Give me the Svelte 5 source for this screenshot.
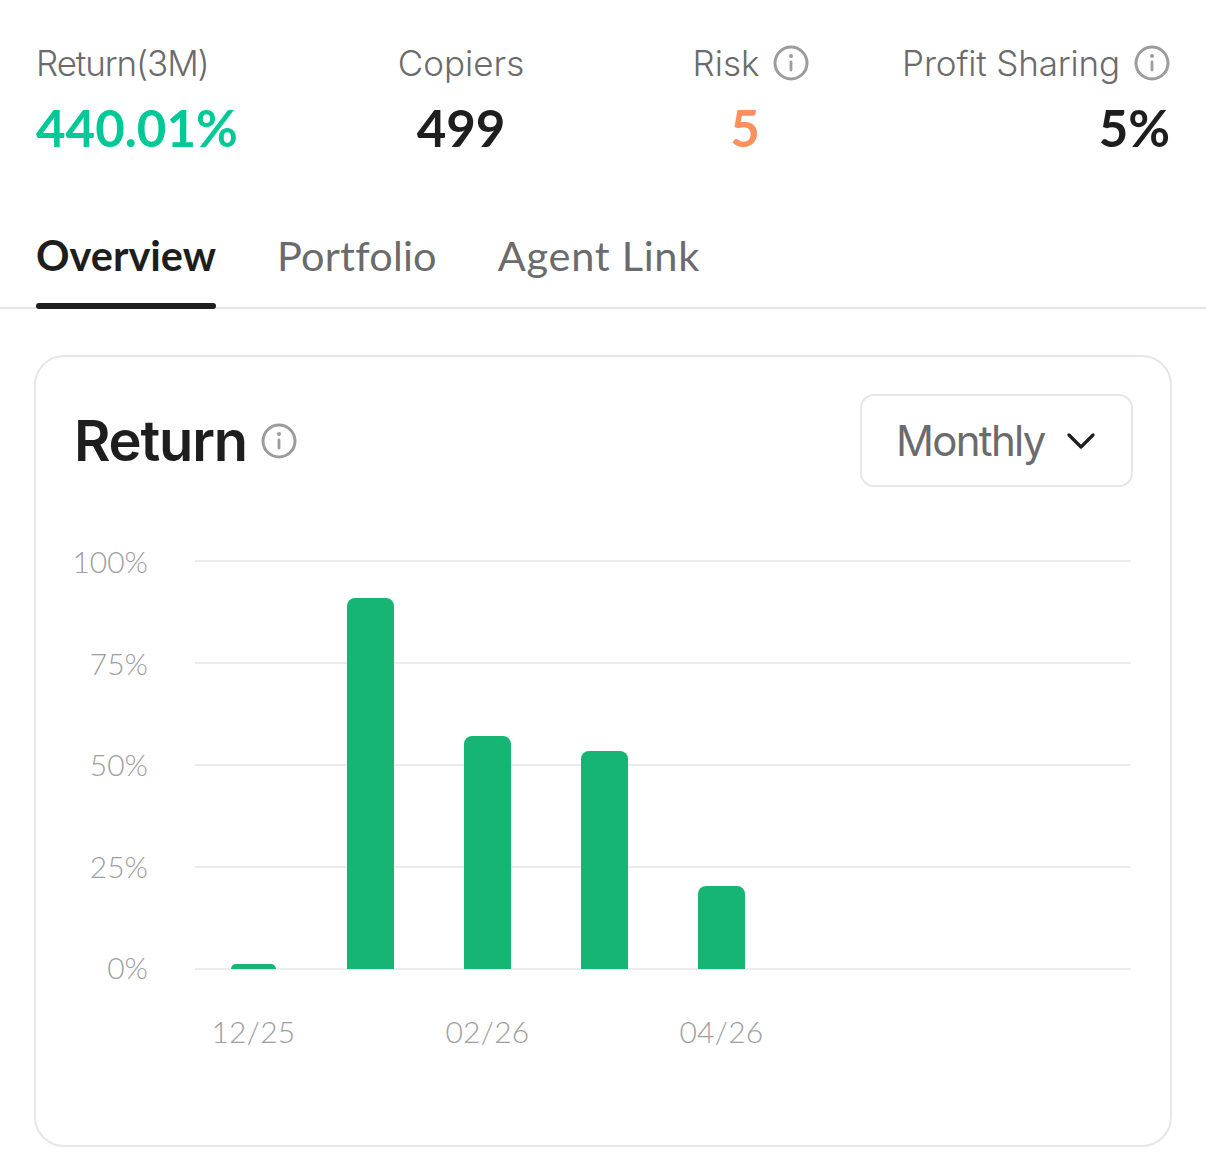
<script>
  const stats = [
    { label: 'Return(3M)', value: '440.01%', cls: 'green', info: false, align: 'start' },
    { label: 'Copiers', value: '499', cls: '', info: false, align: 'center' },
    { label: 'Risk', value: '5', cls: 'orange', info: true, align: 'center' },
    { label: 'Profit Sharing', value: '5%', cls: '', info: true, align: 'end' }
  ];
  const tabs = ['Overview', 'Portfolio', 'Agent Link'];
  const ticks = ['100%', '75%', '50%', '25%', '0%'];
  // percent of plot height per month, empty slots are future months
  const bars = [1.2, 90.9, 57.1, 53.4, 20.3, 0, 0, 0];
  const months = ['12/25', '', '02/26', '', '04/26', '', '', ''];
</script>

{#snippet info(size)}
  <svg class="info" width={size} height={size} viewBox="0 0 36 36" fill="none">
    <circle cx="18" cy="18" r="16" stroke="#9c9c9c" stroke-width="3" />
    <circle cx="18" cy="11" r="2" fill="#9c9c9c" />
    <rect x="16.6" y="15.5" width="2.8" height="11" rx="1.4" fill="#9c9c9c" />
  </svg>
{/snippet}

<div class="page">
  <div class="stats">
    {#each stats as s}
      <div class="stat {s.align}">
        <div class="label">
          <span>{s.label}</span>
          {#if s.info}{@render info(36)}{/if}
        </div>
        <div class="value {s.cls}">{s.value}</div>
      </div>
    {/each}
  </div>

  <div class="tabs">
    {#each tabs as t, i}
      <div class="tab" class:active={i === 0}>{t}</div>
    {/each}
  </div>

  <div class="card">
    <div class="head">
      <div class="title">
        <h2>Return</h2>
        {@render info(36)}
      </div>
      <div class="select">
        <span>Monthly</span>
        <svg width="28" height="16" viewBox="0 0 28 16" fill="none">
          <path d="M2 2 L14 14 L26 2" stroke="#1e1e1e" stroke-width="3.2" stroke-linecap="round" stroke-linejoin="round" />
        </svg>
      </div>
    </div>

    <div class="chart">
      <div class="yaxis">
        {#each ticks as t}<div class="tick">{t}</div>{/each}
      </div>
      <div class="main">
        <div class="plot">
          {#each ticks as t}<div class="line"></div>{/each}
          <div class="bars">
            {#each bars as b}
              <div class="slot">
                {#if b > 0}<div class="bar" style="height: {b}%"></div>{/if}
              </div>
            {/each}
          </div>
        </div>
        <div class="xaxis">
          {#each months as m}<div class="month">{m}</div>{/each}
        </div>
      </div>
    </div>
  </div>
</div>

<style>
  :global(body) {
    background: #fff;
  }

  .page {
    width: 1206px;
    height: 1168px;
    padding-top: 40px;
    box-sizing: border-box;
    font-family: Lato, "Liberation Sans", sans-serif;
    overflow: hidden;
  }

  .stats {
    display: grid;
    grid-template-columns: 350px 150px 325px 1fr;
    padding: 0 36px;
  }

  .stat {
    display: flex;
    flex-direction: column;
  }
  .stat.start { align-items: flex-start; }
  .stat.center { align-items: center; }
  .stat.end { align-items: flex-end; }
  .stat:nth-child(3) { margin-left: 105px; }

  .label {
    display: flex;
    align-items: center;
    gap: 14px;
    height: 46px;
    font-family: Inter, "Liberation Sans", sans-serif;
    font-size: 35px;
    font-weight: 300;
    color: #6b6b6b;
  }
  .stat:first-child .label { letter-spacing: -1.1px; }
  .stat:last-child .label { letter-spacing: -0.15px; }

  .value {
    margin-top: 10px;
    font-size: 51px;
    line-height: 64px;
    font-weight: 700;
    color: #1e1e1e;
  }
  .value.green { color: #00c896; }
  .value.orange { color: #ff8f5c; padding-right: 12px; }

  .info {
    flex: none;
  }

  .tabs {
    display: flex;
    gap: 61px;
    margin-top: 52px;
    padding: 0 36px;
    height: 97px;
    box-sizing: border-box;
    border-bottom: 2px solid #e6e6e6;
  }

  .tab {
    position: relative;
    font-size: 41.5px;
    line-height: 86px;
    color: #6b6b6b;
  }
  .tab:nth-child(2) { letter-spacing: 0.2px; }
  .tab:nth-child(3) { letter-spacing: 0.7px; }
  .tab.active {
    color: #1e1e1e;
    font-weight: 700;
  }
  .tab.active::after {
    content: '';
    position: absolute;
    left: 0;
    right: 0;
    top: 91px;
    height: 6px;
    border-radius: 3px;
    background: #1e1e1e;
  }

  .card {
    margin: 46px 34px 0;
    height: 792px;
    box-sizing: border-box;
    border: 2px solid #e6e6e6;
    border-radius: 30px;
    padding: 37px 37px 0 39px;
  }

  .head {
    display: flex;
    justify-content: space-between;
    align-items: center;
  }

  .title {
    display: flex;
    align-items: center;
    gap: 14px;
  }

  h2 {
    margin: 0 0 0 -1px;
    font-family: Inter, "Liberation Sans", sans-serif;
    font-size: 56px;
    font-weight: 600;
    letter-spacing: -1.2px;
    color: #1e1e1e;
  }

  .select {
    display: flex;
    align-items: center;
    justify-content: space-between;
    width: 273px;
    height: 93px;
    box-sizing: border-box;
    padding: 0 36px 0 34px;
    border: 2px solid #e6e6e6;
    border-radius: 14px;
    font-family: Inter, "Liberation Sans", sans-serif;
    font-size: 42px;
    letter-spacing: -1.7px;
    color: #6b6b6b;
  }

  .chart {
    display: flex;
    margin-top: 73px;
    margin-right: 2px;
  }

  .yaxis {
    width: 120px;
    height: 408px;
    flex: none;
    display: flex;
    flex-direction: column;
    justify-content: space-between;
    align-items: flex-end;
    box-sizing: border-box;
    padding-right: 47px;
  }

  .tick {
    height: 2px;
    line-height: 2px;
    font-size: 30px;
    font-weight: 300;
    color: #9e9e9e;
  }

  .main {
    flex: 1;
  }

  .plot {
    position: relative;
    height: 410px;
    display: flex;
    flex-direction: column;
    justify-content: space-between;
  }

  .line {
    height: 2px;
    background: #ececec;
  }

  .bars {
    position: absolute;
    left: 0;
    right: 0;
    top: 1px;
    bottom: 1px;
    display: grid;
    grid-template-columns: repeat(8, 1fr);
  }

  .slot {
    display: flex;
    align-items: flex-end;
    justify-content: center;
  }

  .bar {
    width: 47px;
    border-radius: 8px 8px 0 0;
    background: #16b574;
  }
  .slot:first-child .bar {
    width: 45px;
  }

  .xaxis {
    display: grid;
    grid-template-columns: repeat(8, 1fr);
    margin-top: 42px;
  }

  .month {
    text-align: center;
    white-space: nowrap;
    font-size: 30px;
    letter-spacing: 0.3px;
    line-height: 38px;
    font-weight: 300;
    color: #9e9e9e;
  }
</style>
